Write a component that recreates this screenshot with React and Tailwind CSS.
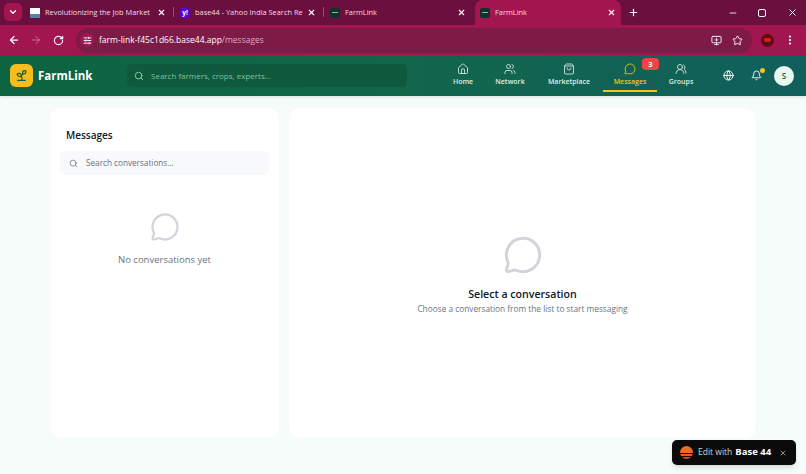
import React from 'react';
import { ChevronDown, X, Plus, Minus, ArrowLeft, ArrowRight, RotateCw, SlidersHorizontal, MonitorDown, Star, EllipsisVertical, Search, Sprout, Home, Users, UsersRound, ShoppingBag, MessageCircle, Globe, Bell } from 'lucide-react';

const tabs = [
    { title: 'Revolutionizing the Job Market', icon: 'doc' },
    { title: 'base44 - Yahoo India Search Re', icon: 'yahoo' },
    { title: 'FarmLink', icon: 'farm' },
];

const navItems = [
    { label: 'Home', Icon: Home, className: 'w-[44px]' },
    { label: 'Network', Icon: Users, className: 'w-[50px]' },
    { label: 'Marketplace', Icon: ShoppingBag, className: 'w-[68px]' },
    { label: 'Messages', Icon: MessageCircle, className: 'w-[54px]', active: true, badge: 3 },
    { label: 'Groups', Icon: UsersRound, className: 'w-[48px]' },
];

const Favicon = ({ type }) => {
    if (type === 'doc') {
        return (
            <div className="w-[10px] h-[10px] bg-white flex flex-col justify-end shrink-0">
                <div className="h-[4px] bg-[#5b7fa8]" />
            </div>
        );
    }
    if (type === 'yahoo') {
        return <div className="w-[10px] h-[10px] rounded-[2px] bg-[#5f01d1] text-white text-[6.5px] leading-[10px] font-bold text-center shrink-0">y!</div>;
    }
    return (
        <div className="w-[10px] h-[10px] rounded-[2px] bg-[#12332c] flex items-center justify-center shrink-0">
            <div className="w-[6px] h-px bg-[#8fb8a4]" />
        </div>
    );
};

const Tab = ({ title, icon, active }) => (
    <div className={`relative h-[25px] flex items-center shrink-0 ${active ? 'w-[146px] pl-[5px] pr-[5px] bg-[#a3154f] rounded-t-[8px]' : 'w-[149px] pl-[6px] pr-[7px]'}`}>
        <Favicon type={icon} />
        <span className="ml-[5px] flex-1 min-w-0 whitespace-nowrap text-[7.4px] text-[#f2dbe5]">{title}</span>
        <X size={9} strokeWidth={3} className="text-white ml-[8px] shrink-0" />
    </div>
);

const App = () => {
    return (
        <div className="w-[806px] h-[474px] overflow-hidden relative flex flex-col bg-[#f6fcf9] font-['Open_Sans','Noto_Sans',sans-serif]">
            {/* browser tabs */}
            <div className="h-[25px] bg-[#6b0f3e] flex items-end pl-[4px] shrink-0">
                <div className="w-[18px] h-[18px] mb-[4px] rounded-[5px] bg-[#a3154f] flex items-center justify-center text-white shrink-0">
                    <ChevronDown size={10} strokeWidth={3} />
                </div>
                <div className="w-[2px] shrink-0" />
                <Tab {...tabs[0]} />
                <div className="w-px h-[10px] bg-[#a04a72] mb-[8px] shrink-0" />
                <Tab {...tabs[1]} />
                <div className="w-px h-[10px] bg-[#a04a72] mb-[8px] shrink-0" />
                <Tab {...tabs[2]} />
                <div className="w-[2px] shrink-0" />
                <Tab {...tabs[2]} active />
                <Plus size={11} strokeWidth={2.5} className="text-white ml-[7px] mb-[7px] shrink-0" />
                <div className="flex items-center ml-[89px] mb-[7px] text-white">
                    <Minus size={10} strokeWidth={2} />
                    <div className="ml-[20px] w-[8px] h-[8px] border-[1.5px] border-white rounded-[2px]" />
                    <X size={11} strokeWidth={2} className="ml-[21px]" />
                </div>
            </div>

            {/* browser toolbar */}
            <div className="h-[30px] bg-[#a3154f] flex items-center pl-[8px] shrink-0">
                <ArrowLeft size={12} strokeWidth={2.5} className="text-white shrink-0" />
                <ArrowRight size={12} strokeWidth={2} className="text-[#c9709a] ml-[10px] shrink-0" />
                <RotateCw size={11} strokeWidth={2.5} className="text-white ml-[11px] shrink-0" />
                <div className="ml-[12px] w-[676px] h-[25px] rounded-full bg-[#7d1a46] flex items-center pl-[4px] pr-[9px] shrink-0">
                    <div className="w-[14px] h-[14px] rounded-full bg-[#a3154f] flex items-center justify-center">
                        <SlidersHorizontal size={9} strokeWidth={2.5} className="text-white" />
                    </div>
                    <span className="ml-[5px] text-[8.5px] text-white whitespace-nowrap">farm-link-f45c1d66.base44.app<span className="text-[#d9a9c0]">/messages</span></span>
                    <div className="flex-1" />
                    <MonitorDown size={11} className="text-white" />
                    <Star size={11} className="text-white ml-[10px]" />
                </div>
                <div className="ml-[9px] w-[13px] h-[13px] rounded-full bg-[#5e0d12] flex items-center justify-center shrink-0">
                    <div className="w-[7px] h-[4px] rounded-full bg-[#d3201f]" />
                </div>
                <EllipsisVertical size={12} strokeWidth={2.5} className="text-white ml-[10px] shrink-0" />
            </div>

            {/* app header */}
            <header className="h-[41px] bg-gradient-to-r from-[#0c6440] via-[#12664a] to-[#115f5d] flex items-center pl-[10px] shrink-0 shadow-[0_1px_3px_rgba(0,0,0,0.12)] z-10">
                <div className="w-[23px] h-[23px] rounded-[6px] bg-[#f7bd1e] flex items-center justify-center shrink-0">
                    <Sprout size={13} strokeWidth={2.2} className="text-[#14613b]" />
                </div>
                <span className="ml-[5px] w-[89px] shrink-0 text-[11.5px] font-bold text-white">FarmLink</span>
                <div className="w-[280px] h-[23px] rounded-[5px] bg-[#0f5a3d] flex items-center pl-[7px] shrink-0">
                    <Search size={10} className="text-[#9ed8bb]" />
                    <span className="ml-[7px] text-[8px] text-[#7fc09f]">Search farmers, crops, experts...</span>
                </div>
                <nav className="flex items-stretch ml-[34px] h-[41px] shrink-0">
                    {navItems.map(({ label, Icon, className, active, badge }) => (
                        <div key={label} className={`relative flex flex-col items-center justify-center shrink-0 ${className}`}>
                            <Icon size={12} strokeWidth={1.7} className={active ? 'text-[#f5c518]' : 'text-[#dcefe6]'} />
                            <span className={`mt-[2px] text-[7px] font-semibold whitespace-nowrap ${active ? 'text-[#f5c518]' : 'text-[#dcefe6]'}`}>{label}</span>
                            {badge && <span className="absolute top-[3px] right-[-2px] w-[17px] h-[12px] rounded-[4px] bg-[#ef4444] text-white text-[7.5px] font-bold leading-[12px] text-center">{badge}</span>}
                            {active && <span className="absolute bottom-[4px] left-0 right-0 h-[2px] bg-[#f5c518]" />}
                        </div>
                    ))}
                </nav>
                <Globe size={11} className="text-white ml-[18px] shrink-0" />
                <div className="relative ml-[17px] shrink-0">
                    <Bell size={11} className="text-white" />
                    <span className="absolute -top-[2px] -right-[3px] w-[5px] h-[5px] rounded-full bg-[#f5c518]" />
                </div>
                <div className="ml-[12px] w-[20px] h-[20px] rounded-full bg-[#e7f8ef] text-[#14613b] text-[8px] font-semibold flex items-center justify-center shrink-0">S</div>
            </header>

            {/* messages */}
            <main className="flex-1 flex gap-[10px] pl-[50px] pt-[12px] pb-[36px]">
                <section className="w-[229px] bg-white rounded-[10px] shadow-[0_0_2px_rgba(0,0,0,0.04)] flex flex-col">
                    <h2 className="pl-[16px] pt-[20px] text-[10px] leading-[14px] font-semibold text-[#111827]">Messages</h2>
                    <div className="mx-[10px] mt-[9px] h-[24px] rounded-[5px] bg-[#f8f9fb] flex items-center pl-[9px]">
                        <Search size={9} className="text-[#6b7280]" />
                        <span className="ml-[8px] text-[8.2px] text-[#6b7280]">Search conversations...</span>
                    </div>
                    <div className="flex flex-col items-center mt-[37px]">
                        <MessageCircle size={30} strokeWidth={1.8} className="text-[#d1d5db]" />
                        <span className="mt-[11px] text-[9.5px] text-[#6b7280]">No conversations yet</span>
                    </div>
                </section>
                <section className="w-[467px] bg-white rounded-[10px] shadow-[0_0_2px_rgba(0,0,0,0.04)] flex flex-col items-center pt-[127px]">
                    <MessageCircle size={40} strokeWidth={1.8} className="text-[#d1d5db]" />
                    <h3 className="mt-[12px] text-[10.6px] leading-[14px] font-semibold text-[#111827]">Select a conversation</h3>
                    <p className="mt-[2px] text-[8.3px] leading-[12px] text-[#6b7280]">Choose a conversation from the list to start messaging</p>
                </section>
            </main>

            {/* base44 badge */}
            <div className="absolute left-[672px] top-[440px] w-[124px] h-[25px] rounded-[5px] bg-[#0b0b0c] flex items-center pl-[8px] shadow-md">
                <div className="w-[13px] h-[13px] rounded-full shrink-0 bg-[linear-gradient(#f26a21_0_55%,#0b0b0c_55%_62%,#e85d1c_62%_78%,#0b0b0c_78%_84%,#c94f17_84%)]" />
                <span className="ml-[5px] text-[8.5px] text-[#d1d5db] whitespace-nowrap">Edit with</span>
                <span className="ml-[3px] text-[9.5px] font-bold text-white whitespace-nowrap">Base 44</span>
                <X size={8} className="text-[#c4c4c4] ml-[8px] shrink-0" />
            </div>
        </div>
    );
};

export default App;
